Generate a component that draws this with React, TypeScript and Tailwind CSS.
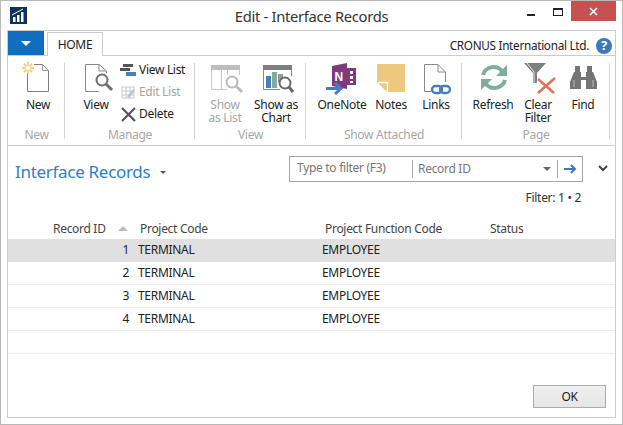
import type { ReactNode } from 'react';

// Ribbon icons, all drawn in the same 32x32 box
function NewIcon() {
  return (
    <svg width="32" height="32" viewBox="0 0 32 32" fill="none" className="overflow-visible">
      <path d="M5.500 12V29.500H26.500V8.500L20.500 2.500H12" stroke="#7f7f7f" />
      <path d="M20.500 2.500V8.500H26.500" stroke="#9a9a9a" />
      <path d="M6 0V12M0 6H12M1.800 1.800L10.200 10.200M10.200 1.800L1.800 10.200" stroke="#f0c35e" strokeWidth="1.6" />
      <circle cx="6" cy="6" r="2.200" fill="#fff" />
    </svg>
  );
}

function ViewIcon() {
  return (
    <svg width="32" height="32" viewBox="0 0 32 32" fill="none" className="overflow-visible">
      <path d="M5.500 29.500V2.500H19L26.500 9V11M19 2.500V9H26.500M5.500 29.500H19" stroke="#8a8a8a" />
      <circle cx="22" cy="18" r="5.500" stroke="#6f6f6f" strokeWidth="2" fill="#fff" />
      <path d="M26 22L32 28" stroke="#6f6f6f" strokeWidth="3" />
    </svg>
  );
}

function ShowListIcon() {
  return (
    <svg width="32" height="32" viewBox="0 0 32 32" fill="none" className="overflow-visible">
      <rect x="2" y="3" width="29" height="5" fill="#bdbdbd" />
      <path d="M2.500 8V27.500H18M30.500 8V13M12.500 8V27M18.500 8V13" stroke="#c8c8c8" />
      <circle cx="23" cy="20" r="5.500" stroke="#bbbbbb" strokeWidth="2" fill="#fff" />
      <path d="M27 24L33 30" stroke="#bbbbbb" strokeWidth="3" />
    </svg>
  );
}

function ShowChartIcon() {
  return (
    <svg width="32" height="32" viewBox="0 0 32 32" fill="none" className="overflow-visible">
      <rect x="3" y="3" width="29" height="5" fill="#7f7f7f" />
      <path d="M3.500 8V27.500H20M31.500 8V14" stroke="#8a8a8a" />
      <rect x="6" y="14" width="5" height="12" fill="#4a7ebb" />
      <rect x="12" y="10" width="5" height="16" fill="#7fae9f" />
      <rect x="18" y="12" width="5" height="8" fill="#9a9a9a" />
      <circle cx="25" cy="21" r="5.500" stroke="#6a6a6a" strokeWidth="2" fill="#fff" />
      <path d="M29 25L33 30" stroke="#6a6a6a" strokeWidth="3" />
    </svg>
  );
}

function OneNoteIcon() {
  return (
    <svg width="32" height="32" viewBox="0 0 32 32" fill="none" className="overflow-visible">
      <path d="M6 4L21 1V27L6 24Z" fill="#80397b" />
      <rect x="21" y="6" width="9" height="17" fill="#80397b" />
      <path d="M24 9h3v3h-3zM24 14h3v3h-3zM24 19h3v2h-3z" fill="#fff" />
      <text x="8.500" y="19" fill="#fff" fontSize="12" fontWeight="700" fontFamily="Liberation Sans, sans-serif">N</text>
      <path d="M0 26.500H13" stroke="#4a7ebb" strokeWidth="3" />
      <path d="M9 21L15 26.500L9 32" stroke="#4a7ebb" strokeWidth="3" />
    </svg>
  );
}

function NotesIcon() {
  return (
    <svg width="32" height="32" viewBox="0 0 32 32">
      <path d="M2 2H30V30H12L2 20Z" fill="#efc87f" />
      <path d="M3 20.500H12.500V30" stroke="#fff" fill="none" strokeWidth="1.4" />
    </svg>
  );
}

function LinksIcon() {
  return (
    <svg width="32" height="32" viewBox="0 0 32 32" fill="none" className="overflow-visible">
      <path d="M4.500 29.500V2.500H18L25.500 10V20M18 2.500V10H25.500M4.500 29.500H11" stroke="#8a8a8a" />
      <rect x="12" y="24" width="10" height="7" rx="3.500" stroke="#4a7ebb" strokeWidth="2.400" />
      <rect x="20" y="24" width="10" height="7" rx="3.500" stroke="#4a7ebb" strokeWidth="2.400" />
    </svg>
  );
}

function RefreshIcon() {
  return (
    <svg width="32" height="32" viewBox="0 0 32 32" fill="none">
      <path d="M6 13C8 5 19 2 25 9" stroke="#7fae9f" strokeWidth="4" />
      <path d="M30 3V14H19Z" fill="#7fae9f" />
      <path d="M28 18C26 26 15 29 9 22" stroke="#7fae9f" strokeWidth="4" />
      <path d="M4 28V17H15Z" fill="#7fae9f" />
    </svg>
  );
}

function ClearFilterIcon() {
  return (
    <svg width="32" height="32" viewBox="0 0 32 32" fill="none" className="overflow-visible">
      <path d="M2 1H24L15 11V21H11V11Z" fill="#7f7f7f" />
      <path d="M5 1L12 10V21" stroke="#fff" strokeWidth="0.8" />
      <path d="M16 31L33 16M16 17L32 31" stroke="#e0745a" strokeWidth="2.600" />
    </svg>
  );
}

function FindIcon() {
  return (
    <svg width="32" height="32" viewBox="0 0 32 32" fill="#757575">
      <rect x="8" y="4" width="5" height="6" />
      <rect x="20" y="4" width="5" height="6" />
      <path d="M7 10H14V15H19V10H26L30 20V27H19V18H14V27H3V20Z" />
      <path d="M7 18V25M26 18V25" stroke="#a8a8a8" strokeWidth="1.400" />
    </svg>
  );
}

function LargeButton({ icon, label, disabled, className }: { icon: ReactNode; label: ReactNode; disabled?: boolean; className: string }) {
  return (
    <div className={`flex flex-col items-center shrink-0 ${className}`}>
      <div className="w-[32px] h-[32px]">{icon}</div>
      <div className={`mt-[4px] text-center leading-[13px] whitespace-nowrap ${disabled ? 'text-[#a6a6a6]' : 'text-[#222]'}`}>{label}</div>
    </div>
  );
}

function SmallButton({ icon, label, disabled }: { icon: ReactNode; label: string; disabled?: boolean }) {
  return (
    <div className={`flex items-center gap-[3px] h-[22px] whitespace-nowrap ${disabled ? 'text-[#a6a6a6]' : 'text-[#222]'}`}>
      <span className="w-[16px] h-[16px] flex items-center justify-center">{icon}</span>
      {label}
    </div>
  );
}

function RibbonGroup({ label, width, pad, children }: { label: string; width: string; pad: string; children: ReactNode }) {
  return (
    <div className={`relative flex flex-col shrink-0 ${width}`}>
      <div className={`flex flex-1 ${pad}`}>{children}</div>
      <div className="text-center text-[#a6a6a6] leading-[14px] mb-[3px]">{label}</div>
      <div className="absolute right-0 top-[7px] bottom-[6px] w-px bg-[#d4d4d4]" />
    </div>
  );
}

const rows = [1, 2, 3, 4];

export default function App() {
  return (
    <div
      className="w-[623px] h-[425px] bg-white border border-[#b8b8b8] flex flex-col text-[12px] overflow-hidden"
      style={{ fontFamily: '"Noto Sans", "Open Sans", sans-serif', letterSpacing: '-0.3px' }}
    >
      {/* title bar */}
      <div className="relative h-[29px] shrink-0 flex items-center justify-center">
        <svg className="absolute left-[9px] top-[6px]" width="17" height="17" viewBox="0 0 17 17">
          <rect width="17" height="17" fill="#12305c" />
          <path d="M3 10h2.500v5H3zM7 8h2.500v7H7zM11 5h2.500v10H11z" fill="#fff" />
          <path d="M2 8L13 2" stroke="#fff" strokeWidth="1" />
        </svg>
        <span className="text-[14.75px] text-[#333] mt-[1px]">Edit - Interface Records</span>
        <div className="absolute right-[59px] top-[7px] flex items-start gap-[18px]">
          <div className="w-[8px] h-[2px] bg-[#222] mt-[6px]" />
          <div className="w-[10px] h-[8px] border border-[#222] border-t-2" />
        </div>
        <div className="absolute right-[6px] top-0 w-[45px] h-[20px] bg-[#c75050] flex items-center justify-center">
          <svg width="9" height="9" viewBox="0 0 9 9">
            <path d="M1 1L8 8M8 1L1 8" stroke="#fff" strokeWidth="1.600" />
          </svg>
        </div>
      </div>

      <div className="flex-1 mx-[6px] mb-[6px] border border-[#cccccc] flex flex-col min-h-0">
        {/* tab strip */}
        <div className="h-[24px] shrink-0 flex items-end">
          <div className="w-[36px] h-[24px] bg-[#106ebe] flex items-center justify-center">
            <div className="border-x-[5px] border-x-transparent border-t-[5px] border-t-white" />
          </div>
          <div className="ml-[3px] w-[56px] h-[24px] border border-b-0 border-[#cccccc] bg-white flex items-center justify-center text-[#222] relative top-px z-10">HOME</div>
          <div className="ml-auto flex items-center pr-[3px] text-[#222]">
            <span className="mr-[7px] text-[11.75px]">CRONUS International Ltd.</span>
            <div className="w-[16px] h-[16px] rounded-full bg-[#3d79b8] text-white font-bold text-[13px] flex items-center justify-center">?</div>
          </div>
        </div>

        {/* ribbon */}
        <div className="h-[91px] shrink-0 border-y border-[#cccccc] flex">
          <RibbonGroup label="New" width="w-[57px]" pad="pl-[14px] pt-[6px]">
            <LargeButton icon={<NewIcon />} label="New" className="w-[32px]" />
          </RibbonGroup>
          <RibbonGroup label="Manage" width="w-[130px]" pad="pl-[15px] pt-[6px]">
            <LargeButton icon={<ViewIcon />} label="View" className="w-[32px]" />
            <div className="ml-[8px] -mt-[3px] flex flex-col">
              <SmallButton
                label="View List"
                icon={
                  <svg width="16" height="14" viewBox="0 0 16 14">
                    <path d="M3 1h10v3H3z" fill="#555" />
                    <path d="M0 5h10v3H0z" fill="#555" />
                    <path d="M6 9h10v4H6z" fill="#4a7ebb" />
                  </svg>
                }
              />
              <SmallButton
                disabled
                label="Edit List"
                icon={
                  <svg width="15" height="15" viewBox="0 0 15 15" fill="none">
                    <path d="M1 2h12v11H1zM1 6h12M1 10h12M5 2v11M9 2v11" stroke="#c8c8c8" />
                    <path d="M7 12L13 5" stroke="#a9c0d8" strokeWidth="2" />
                  </svg>
                }
              />
              <SmallButton
                label="Delete"
                icon={
                  <svg width="15" height="15" viewBox="0 0 15 15">
                    <path d="M1 1L14 14M14 1L1 14" stroke="#555" strokeWidth="2.200" />
                  </svg>
                }
              />
            </div>
          </RibbonGroup>
          <RibbonGroup label="View" width="w-[111px]" pad="pl-[10px] pt-[6px] gap-[7px]">
            <LargeButton icon={<ShowListIcon />} label={<>Show<br />as List</>} disabled className="w-[40px]" />
            <LargeButton icon={<ShowChartIcon />} label={<>Show as<br />Chart</>} className="w-[48px]" />
          </RibbonGroup>
          <RibbonGroup label="Show Attached" width="w-[156px]" pad="pl-[11px] pt-[6px]">
            <LargeButton icon={<OneNoteIcon />} label="OneNote" className="w-[50px]" />
            <LargeButton icon={<NotesIcon />} label="Notes" className="w-[48px]" />
            <LargeButton icon={<LinksIcon />} label="Links" className="w-[42px]" />
          </RibbonGroup>
          <RibbonGroup label="Page" width="w-[148px]" pad="pl-[9px] pt-[6px]">
            <LargeButton icon={<RefreshIcon />} label="Refresh" className="w-[44px]" />
            <LargeButton icon={<ClearFilterIcon />} label={<>Clear<br />Filter</>} className="w-[46px]" />
            <LargeButton icon={<FindIcon />} label="Find" className="w-[44px]" />
          </RibbonGroup>
        </div>

        {/* list header */}
        <div className="flex-1 flex flex-col min-h-0">
          <div className="h-[38px] mt-[10px] shrink-0 flex items-start">
            <div className="ml-[7px] mt-[3px] text-[17px] leading-[26px] text-[#2f7fc1]">Interface Records</div>
            <div className="ml-[10px] mt-[15px] border-x-[3px] border-x-transparent border-t-[3px] border-t-[#555]" />
            <div className="ml-auto w-[294px] h-[26px] border border-[#a6a6a6] flex items-center text-[#777]">
              <span className="w-[123px] pl-[7px] h-[18px] leading-[16px] border-r border-[#a6a6a6] shrink-0">Type to filter (F3)</span>
              <span className="pl-[5px] flex-1">Record ID</span>
              <div className="border-x-[4px] border-x-transparent border-t-[4px] border-t-[#666] mr-[6px]" />
              <div className="w-[25px] h-[18px] border-l border-[#a6a6a6] flex items-center justify-center">
                <svg width="13" height="10" viewBox="0 0 13 10" fill="none">
                  <path d="M0 5H11M7 1L11 5L7 9" stroke="#3d79b8" strokeWidth="2" />
                </svg>
              </div>
            </div>
            <svg className="ml-[15px] mr-[7px] mt-[9px]" width="10" height="7" viewBox="0 0 10 7" fill="none">
              <path d="M1 1L5 5L9 1" stroke="#444" strokeWidth="2" />
            </svg>
          </div>
          <div className="h-[14px] -mt-[3px] pr-[34px] text-right leading-[14px] text-[#333]">Filter: 1 • 2</div>

          {/* table */}
          <div className="mt-[15px] h-[19px] pb-[2px] shrink-0 flex items-center text-[#444]">
            <span className="ml-[45px] w-[65px]">Record ID</span>
            <div className="w-[9px] border-x-[5px] border-x-transparent border-b-[5px] border-b-[#bbbbbb]" />
            <span className="ml-[12px] w-[185px]">Project Code</span>
            <span className="w-[165px]">Project Function Code</span>
            <span>Status</span>
          </div>
          {rows.map((id, i) => (
            <div
              key={id}
              className={`h-[23px] shrink-0 flex items-center text-[#222] border-b ${i === 0 ? 'bg-[#e0e0e0] border-[#e0e0e0]' : 'border-[#ebebeb]'}`}
            >
              <span className="w-[121px] text-right">{id}</span>
              <span className="ml-[9px] w-[184px]">TERMINAL</span>
              <span>EMPLOYEE</span>
            </div>
          ))}
          <div className="h-[23px] shrink-0 border-b border-[#ebebeb]" />

          <div className="flex-1 flex items-end justify-end pr-[9px] pb-[9px]">
            <div className="w-[73px] h-[23px] border border-[#acacac] bg-gradient-to-b from-[#f0f0f0] to-[#e5e5e5] flex items-center justify-center text-[#222]">OK</div>
          </div>
        </div>
      </div>
    </div>
  );
}
